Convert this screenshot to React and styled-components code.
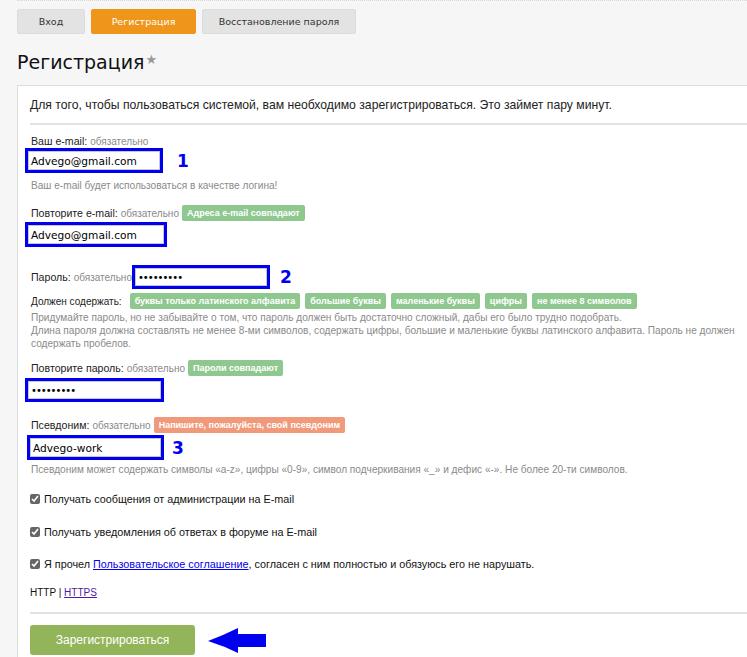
import { createGlobalStyle, styled } from "styled-components";

const Global = createGlobalStyle`
  html, body {
    margin: 0;
    background: #f6f6f6;
    overflow: hidden;
  }
  body {
    font-family: "Liberation Sans", Arial, sans-serif;
    font-size: 11px;
    color: #222;
  }
`;

const Page = styled.div`
  width: 760px;
  border-top: 1px dotted #d8d8d8;
  margin-left: 17px;
`;

const Tabs = styled.div`
  display: flex;
  gap: 6px;
  margin-top: 8px;
`;

const Tab = styled.div`
  width: ${(p) => p.$w}px;
  height: 25px;
  box-sizing: border-box;
  display: flex;
  align-items: center;
  justify-content: center;
  border-radius: 2px;
  font-family: "DejaVu Sans", sans-serif;
  font-size: 9.5px;
  background: ${(p) => (p.$active ? "#ee951a" : "#e3e3e3")};
  color: ${(p) => (p.$active ? "#fff" : "#333")};
  border: 1px solid ${(p) => (p.$active ? "#ee951a" : "#dcdcdc")};
`;

const Title = styled.h1`
  margin: 14px 0 0;
  font-weight: normal;
  font-family: "DejaVu Sans", sans-serif;
  font-size: 19px;
  line-height: 28px;
  color: #111;
  display: flex;
  align-items: center;
`;

const Star = styled.span`
  color: #999;
  font-size: 13px;
  margin-left: 1px;
  margin-top: -4px;
`;

const Panel = styled.div`
  margin-top: 9px;
  background: #fff;
  border: 1px solid #dcdcdc;
  border-right: none;
  padding: 0 0 0 12px;
`;

const Intro = styled.p`
  margin: 0;
  padding: 11px 0 10px;
  font-size: 12.2px;
  line-height: 16px;
  color: #222;
  border-bottom: 2px solid #e2e2e2;
`;

const Field = styled.div`
  margin-top: ${(p) => p.$mt}px;
`;

const LabelRow = styled.div`
  display: flex;
  align-items: center;
  gap: 3px;
  height: 16px;
  margin-left: 1px;
`;

const Label = styled.span`
  font-size: 10.6px;
  color: #222;
`;

const Req = styled.span`
  font-size: 10px;
  color: #8a8a8a;
`;

const Badge = styled.span`
  font-size: 9px;
  font-weight: bold;
  color: #fff;
  background: ${(p) => (p.$warn ? "#f09a7b" : "#8fc88f")};
  border-radius: 2px;
  padding: 2px 5px;
  line-height: 12px;
`;

const InputRow = styled.div`
  display: flex;
  align-items: center;
  margin-top: ${(p) => p.$mt ?? 1}px;
  margin-left: ${(p) => p.$ml ?? -5}px;
`;

const Input = styled.div`
  width: ${(p) => p.$w}px;
  height: ${(p) => p.$h ?? 25}px;
  box-sizing: border-box;
  border: 3px solid #0000f0;
  box-shadow: inset 0 0 0 1px #c8c8c8;
  display: flex;
  align-items: center;
  padding-left: 3px;
  font-family: "DejaVu Sans", sans-serif;
  font-size: ${(p) => (p.$pw ? "10px" : "10.6px")};
  color: #000;
  letter-spacing: ${(p) => (p.$pw ? "-1px" : "0")};
`;

const Num = styled.span`
  font-family: "DejaVu Sans", sans-serif;
  font-weight: bold;
  font-size: 17px;
  color: #0000f0;
  margin-left: ${(p) => p.$ml ?? 14}px;
`;

const Hint = styled.p`
  margin: ${(p) => p.$mt ?? 6}px 0 0 1px;
  font-size: 10.1px;
  line-height: 13px;
  color: #8a8a8a;
`;

const Inline = styled.div`
  display: flex;
  align-items: center;
  gap: 1px;
  margin-top: 18px;
`;

const Checks = styled.div`
  display: flex;
  align-items: center;
  gap: 5px;
  margin-top: 4px;
  height: 16px;
  margin-left: 1px;
`;

const CheckLabel = styled.span`
  font-size: 10px;
  color: #222;
  margin-right: 3px;
`;

const Check = styled.label`
  display: flex;
  align-items: center;
  gap: 4px;
  height: 14px;
  font-size: 10.8px;
  color: #111;
  margin-top: ${(p) => p.$mt}px;
  input {
    margin: 0;
    width: 10px;
    height: 10px;
    accent-color: #666;
  }
`;

const A = styled.a`
  color: #0000ee;
  text-decoration: underline;
`;

const Proto = styled.div`
  margin-top: 15px;
  height: 14px;
  line-height: 14px;
  font-size: 10px;
  color: #111;
  a {
    color: #4b1aa8;
  }
`;

const Footer = styled.div`
  margin-top: 12px;
  border-top: 2px solid #e2e2e2;
  padding: 11px 0 4px;
  display: flex;
  align-items: center;
  gap: 13px;
`;

const Button = styled.button`
  width: 165px;
  height: 30px;
  border: none;
  border-radius: 3px;
  background: #93b55a;
  color: #fff;
  font-family: "Liberation Sans", sans-serif;
  font-size: 12px;
`;

const Arrow = () => (
  <svg width="60" height="27" viewBox="0 0 60 27">
    <path
      d="M0 14 Q16 8 30 1 L30 7 L58 7 L58 20 L30 20 L30 26 Q16 19 0 14 Z"
      fill="#0000f0"
    />
  </svg>
);

export default function App() {
  return (
    <Page>
      <Global />
      <Tabs>
        <Tab $w={68}>Вход</Tab>
        <Tab $w={105} $active>Регистрация</Tab>
        <Tab $w={154}>Восстановление пароля</Tab>
      </Tabs>
      <Title>
        Регистрация<Star>★</Star>
      </Title>
      <Panel>
        <Intro>
          Для того, чтобы пользоваться системой, вам необходимо зарегистрироваться. Это займет пару минут.
        </Intro>

        <Field $mt={8}>
          <LabelRow>
            <Label>Ваш e-mail:</Label>
            <Req>обязательно</Req>
          </LabelRow>
          <InputRow $mt={-1}>
            <Input $w={138}>Advego@gmail.com</Input>
            <Num>1</Num>
          </InputRow>
          <Hint>Ваш e-mail будет использоваться в качестве логина!</Hint>
        </Field>

        <Field $mt={13}>
          <LabelRow>
            <Label>Повторите e-mail:</Label>
            <Req>обязательно</Req>
            <Badge>Адреса e-mail совпадают</Badge>
          </LabelRow>
          <InputRow>
            <Input $w={142}>Advego@gmail.com</Input>
          </InputRow>
        </Field>

        <Inline>
          <LabelRow>
            <Label>Пароль:</Label>
            <Req>обязательно</Req>
          </LabelRow>
          <InputRow $mt={0} $ml={-1}>
            <Input $w={138} $h={24} $pw>•••••••••</Input>
            <Num $ml={10}>2</Num>
          </InputRow>
        </Inline>
        <Checks>
          <CheckLabel>Должен содержать:</CheckLabel>
          <Badge>буквы только латинского алфавита</Badge>
          <Badge>большие буквы</Badge>
          <Badge>маленькие буквы</Badge>
          <Badge>цифры</Badge>
          <Badge>не менее 8 символов</Badge>
        </Checks>
        <Hint $mt={2}>
          Придумайте пароль, но не забывайте о том, что пароль должен быть достаточно сложный, дабы его было трудно подобрать.
          <br />
          Длина пароля должна составлять не менее 8-ми символов, содержать цифры, большие и маленькие буквы латинского алфавита. Пароль не должен
          <br />
          содержать пробелов.
        </Hint>

        <Field $mt={10}>
          <LabelRow>
            <Label>Повторите пароль:</Label>
            <Req>обязательно</Req>
            <Badge>Пароли совпадают</Badge>
          </LabelRow>
          <InputRow $mt={2}>
            <Input $w={139} $h={24} $pw>•••••••••</Input>
          </InputRow>
        </Field>

        <Field $mt={15}>
          <LabelRow>
            <Label>Псевдоним:</Label>
            <Req>обязательно</Req>
            <Badge $warn>Напишите, пожалуйста, свой псевдоним</Badge>
          </LabelRow>
          <InputRow $mt={2} $ml={-3}>
            <Input $w={137}>Advego-work</Input>
            <Num $ml={8}>3</Num>
          </InputRow>
          <Hint $mt={3}>
            Псевдоним может содержать символы «a-z», цифры «0-9», символ подчеркивания «_» и дефис «-». Не более 20-ти символов.
          </Hint>
        </Field>

        <Check $mt={16}>
          <input type="checkbox" defaultChecked />
          Получать сообщения от администрации на E-mail
        </Check>
        <Check $mt={19}>
          <input type="checkbox" defaultChecked />
          Получать уведомления об ответах в форуме на E-mail
        </Check>
        <Check $mt={18}>
          <input type="checkbox" defaultChecked />
          <span>
            Я прочел <A href="#">Пользовательское соглашение</A>, согласен с ним полностью и обязуюсь его не нарушать.
          </span>
        </Check>

        <Proto>
          HTTP | <a href="#">HTTPS</a>
        </Proto>

        <Footer>
          <Button>Зарегистрироваться</Button>
          <Arrow />
        </Footer>
      </Panel>
    </Page>
  );
}
